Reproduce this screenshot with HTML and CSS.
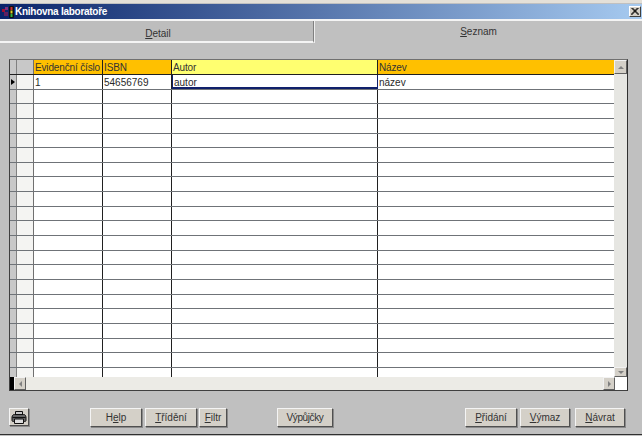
FILE: index.html
```html
<!DOCTYPE html>
<html lang="cs">
<head>
<meta charset="utf-8">
<title>Knihovna laboratoře</title>
<link rel="stylesheet" href="styles.css">
</head>
<body>
<div class="window">
  <div class="titlebar">
    <svg class="appicon" width="13" height="12" viewBox="0 0 13 12"><rect x="0" y="3" width="3" height="3" fill="#a01030"/><rect x="3" y="1" width="3" height="3" fill="#803080"/><rect x="2" y="6" width="4" height="4" fill="#602060"/><rect x="7" y="0" width="5" height="12" rx="1" fill="#101010"/><rect x="8.5" y="1" width="2" height="3" fill="#d03030"/><rect x="8.5" y="4.5" width="2" height="3" fill="#e0d020"/><rect x="8.5" y="8" width="2" height="3" fill="#30b040"/></svg>
    <span class="title">Knihovna laboratoře</span>
    <span class="close"><svg width="8" height="7" viewBox="0 0 8 7"><path d="M0.5 0 L7.5 7 M7.5 0 L0.5 7 M1.5 0 L8 6.5 M6.5 0 L0 6.5" stroke="#000" stroke-width="1"/></svg></span>
  </div>
  <div class="tabs">
    <div class="tab inactive"><span><u>D</u>etail</span></div>
    <div class="tab active"><span><u>S</u>eznam</span></div>
  </div>
  <div class="panel">
    <div class="grid">
      <div class="grid-main">
        <div class="rows" id="rows">
          <div class="row head">
            <div class="c ind"></div><div class="c sel"></div>
            <div class="c n1 org">Evidenční číslo</div>
            <div class="c n2 org">ISBN</div>
            <div class="c n3 yel">Autor</div>
            <div class="c n4 org">Název</div>
          </div>
          <div class="row">
            <div class="c ind"><span class="arrow"></span></div><div class="c sel"></div>
            <div class="c n1">1</div><div class="c n2">54656769</div>
            <div class="c n3 focus">autor</div><div class="c n4">název</div>
          </div>
          <div class="row"><div class="c ind"></div><div class="c sel"></div><div class="c n1"></div><div class="c n2"></div><div class="c n3"></div><div class="c n4"></div></div>
          <div class="row"><div class="c ind"></div><div class="c sel"></div><div class="c n1"></div><div class="c n2"></div><div class="c n3"></div><div class="c n4"></div></div>
          <div class="row"><div class="c ind"></div><div class="c sel"></div><div class="c n1"></div><div class="c n2"></div><div class="c n3"></div><div class="c n4"></div></div>
          <div class="row"><div class="c ind"></div><div class="c sel"></div><div class="c n1"></div><div class="c n2"></div><div class="c n3"></div><div class="c n4"></div></div>
          <div class="row"><div class="c ind"></div><div class="c sel"></div><div class="c n1"></div><div class="c n2"></div><div class="c n3"></div><div class="c n4"></div></div>
          <div class="row"><div class="c ind"></div><div class="c sel"></div><div class="c n1"></div><div class="c n2"></div><div class="c n3"></div><div class="c n4"></div></div>
          <div class="row"><div class="c ind"></div><div class="c sel"></div><div class="c n1"></div><div class="c n2"></div><div class="c n3"></div><div class="c n4"></div></div>
          <div class="row"><div class="c ind"></div><div class="c sel"></div><div class="c n1"></div><div class="c n2"></div><div class="c n3"></div><div class="c n4"></div></div>
          <div class="row"><div class="c ind"></div><div class="c sel"></div><div class="c n1"></div><div class="c n2"></div><div class="c n3"></div><div class="c n4"></div></div>
          <div class="row"><div class="c ind"></div><div class="c sel"></div><div class="c n1"></div><div class="c n2"></div><div class="c n3"></div><div class="c n4"></div></div>
          <div class="row"><div class="c ind"></div><div class="c sel"></div><div class="c n1"></div><div class="c n2"></div><div class="c n3"></div><div class="c n4"></div></div>
          <div class="row"><div class="c ind"></div><div class="c sel"></div><div class="c n1"></div><div class="c n2"></div><div class="c n3"></div><div class="c n4"></div></div>
          <div class="row"><div class="c ind"></div><div class="c sel"></div><div class="c n1"></div><div class="c n2"></div><div class="c n3"></div><div class="c n4"></div></div>
          <div class="row"><div class="c ind"></div><div class="c sel"></div><div class="c n1"></div><div class="c n2"></div><div class="c n3"></div><div class="c n4"></div></div>
          <div class="row"><div class="c ind"></div><div class="c sel"></div><div class="c n1"></div><div class="c n2"></div><div class="c n3"></div><div class="c n4"></div></div>
          <div class="row"><div class="c ind"></div><div class="c sel"></div><div class="c n1"></div><div class="c n2"></div><div class="c n3"></div><div class="c n4"></div></div>
          <div class="row"><div class="c ind"></div><div class="c sel"></div><div class="c n1"></div><div class="c n2"></div><div class="c n3"></div><div class="c n4"></div></div>
          <div class="row"><div class="c ind"></div><div class="c sel"></div><div class="c n1"></div><div class="c n2"></div><div class="c n3"></div><div class="c n4"></div></div>
          <div class="row"><div class="c ind"></div><div class="c sel"></div><div class="c n1"></div><div class="c n2"></div><div class="c n3"></div><div class="c n4"></div></div>
          <div class="row"><div class="c ind"></div><div class="c sel"></div><div class="c n1"></div><div class="c n2"></div><div class="c n3"></div><div class="c n4"></div></div>
        </div>
        <div class="vscroll">
          <div class="sbtn"><span class="tri up"></span></div>
          <div class="sbtn short"><span class="tri down"></span></div>
        </div>
      </div>
      <div class="grid-bottom">
        <div class="black"></div>
        <div class="sbtn wide"><span class="tri left"></span></div>
        <div class="hspace"></div>
        <div class="sbtn wide"><span class="tri right"></span></div>
        <div class="corner"></div>
      </div>
    </div>
    <div class="buttons">
      <button class="btn print"><svg width="16" height="13" viewBox="0 0 16 13"><path d="M4.5 0.5 H11.5 V4 H4.5 Z" fill="#c8c8c8" stroke="#111"/><path d="M1.5 4.5 Q2 3.5 3.5 3.5 H12.5 Q14 3.5 14.5 4.5 L15 6 V9.5 Q15 10.5 13.5 10.5 H2.5 Q1 10.5 1 9.5 V6 Z" fill="#666" stroke="#111"/><path d="M1.5 6.5 H14.5" stroke="#111"/><path d="M3.5 8 H12.5 V12.5 H3.5 Z" fill="#ddd" stroke="#111"/></svg></button>
      <div class="spacer-a"></div>
      <button class="btn b-help">H<u>e</u>lp</button>
      <button class="btn b-trid"><u>T</u>řídění</button>
      <button class="btn b-filt"><u>F</u>iltr</button>
      <div class="spacer-b"></div>
      <button class="btn b-vyp">Výpůjčky</button>
      <div class="spacer-c"></div>
      <button class="btn b-prid"><u>P</u>řidání</button>
      <button class="btn b-vym"><u>V</u>ýmaz</button>
      <button class="btn b-nav"><u>N</u>ávrat</button>
    </div>
  </div>
</div>
</body>
</html>
```
FILE: styles.css
```css
* { box-sizing: border-box; }
html, body { margin: 0; padding: 0; }
body {
  width: 642px;
  height: 436px;
  overflow: hidden;
  background: #d4d0c8;
  font-family: "Liberation Sans", Arial, sans-serif;
  font-size: 10px;
  color: #222;
}
.window {
  width: 642px;
  height: 436px;
  display: flex;
  flex-direction: column;
  background: #c0c0c0;
  border-top: 3px solid #e4e0d8;
  padding-top: 1px;
}
.titlebar {
  height: 15px;
  flex: none;
  display: flex;
  align-items: center;
  padding: 0 1px 0 2px;
  background: linear-gradient(to right, #0a246a, #a6caf0);
  color: #fff;
  font-weight: bold;
  font-size: 10px;
}
.appicon { flex: none; margin-right: 0; }
.title { flex: 1; letter-spacing: -0.27px; }
.close {
  width: 12px;
  height: 11px;
  background: #d4d0c8;
  border: 1px solid;
  border-color: #fff #404040 #404040 #fff;
  display: flex;
  align-items: center;
  justify-content: center;
}
.tabs {
  height: 24px;
  flex: none;
  display: flex;
  background: #c0c0c0;
  border-top: 2px solid #f4f4f4;
}
.tab { display: flex; justify-content: center; color: #333; font-size: 10px; }
.tab.inactive {
  width: 314px;
  padding-top: 7px;
  padding-left: 3px;
  border-right: 1px solid #808080;
  border-bottom: 2px solid #f4f4f4;
  background: #bdbdbd;
}
.tab.active {
  flex: 1;
  padding-top: 5px;
  border-left: 1px solid #eee;
  background: #c0c0c0;
}
.panel {
  flex: 1;
  display: flex;
  flex-direction: column;
  padding: 16px 0 0 9px;
  border-bottom: 1px solid #303030;
  margin-bottom: 1px;
}
.grid {
  width: 619px;
  height: 332px;
  flex: none;
  display: flex;
  flex-direction: column;
  border: 1px solid #404040;
  border-top-color: #707070;
  border-right-color: #303030;
  background: #ecebe6;
}
.grid-main { height: 317px; flex: none; display: flex; overflow: hidden; }
.rows { width: 604px; flex: none; overflow: hidden; background: #fff; }
.row {
  height: 14.65px;
  display: flex;
  border-bottom: 1px solid #6f7378;
  line-height: 15px;
}
.row.head { height: 15px; border-bottom: 1px solid #202020; letter-spacing: -0.15px; }
.c {
  height: 100%;
  flex: none;
  padding-left: 2px;
  border-right: 1px solid #202020;
  white-space: nowrap;
  overflow: hidden;
  color: #2a2a2a;
}
.ind {
  width: 7px;
  padding: 0;
  background: #c8c8c8;
  display: flex;
  align-items: center;
  justify-content: center;
  border-right: 1px solid #808080;
}
.sel { width: 17px; background: #f4f4f2; border-right: 1px solid #707070; }
.n1 { width: 69px; padding-left: 1px; }
.n2 { width: 69px; padding-left: 1px; }
.n3 { width: 206px; padding-left: 1px; }
.n4 { width: 236px; padding-left: 1px; border-right: 0; }
.head .sel { background: #c8c8c8; }
.org { background: #ffc000; color: #333; }
.yel { background: #ffff70; color: #333; }
.focus {
  border: 1px solid #10206a;
  border-top: 0;
  border-bottom: 2px solid #10206a;
}
.arrow {
  width: 0;
  height: 0;
  border-left: 4px solid #000;
  border-top: 3px solid transparent;
  border-bottom: 3px solid transparent;
}
.vscroll {
  flex: 1;
  display: flex;
  flex-direction: column;
  justify-content: space-between;
  background: #e6e6e2;
}
.sbtn {
  width: 13px;
  height: 14px;
  flex: none;
  background: #d4d0c8;
  border: 1px solid;
  border-color: #f2f2f2 #606060 #606060 #f2f2f2;
  display: flex;
  align-items: center;
  justify-content: center;
}
.sbtn.short { height: 10px; }
.sbtn.wide { width: 12px; height: 13px; }
.tri { width: 0; height: 0; border: 3px solid transparent; }
.tri.up { border-bottom-color: #808080; border-top-width: 0; }
.tri.down { border-top-color: #808080; border-bottom-width: 0; }
.tri.left { border-right-color: #808080; border-left-width: 0; }
.tri.right { border-left-color: #808080; border-right-width: 0; }
.grid-bottom { flex: 1; display: flex; background: #ecebe6; }
.black { width: 4px; background: #000; }
.hspace { flex: 1; }
.corner { width: 12px; background: #fff; }
.buttons {
  height: 19px;
  margin-top: 17px;
  display: flex;
  width: 616px;
}
.btn {
  height: 19px;
  padding: 0;
  font-family: inherit;
  font-size: 10px;
  color: #333;
  background: #d4d0c8;
  border: 1px solid;
  border-color: #f4f4f4 #505050 #505050 #f4f4f4;
  box-shadow: 1px 1px 0 #8a8a8a;
}
.print { width: 20px; height: 18px; display: flex; align-items: center; justify-content: center; }
.spacer-a { width: 61px; }
.b-help { width: 52px; margin-right: 3px; }
.b-trid { width: 52px; margin-right: 2px; }
.b-filt { width: 28px; }
.spacer-b { width: 50px; }
.b-vyp { width: 56px; letter-spacing: -0.4px; }
.spacer-c { flex: 1; }
.b-prid { width: 52px; margin-right: 3px; }
.b-vym { width: 50px; margin-right: 5px; }
.b-nav { width: 50px; }
```
